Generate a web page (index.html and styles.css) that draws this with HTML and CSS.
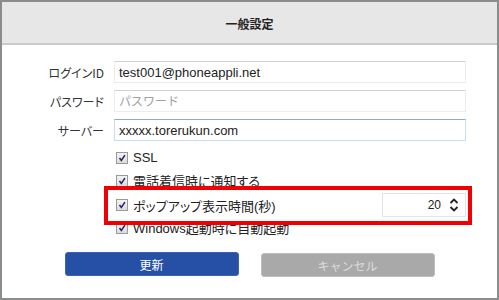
FILE: index.html
```html
<!DOCTYPE html>
<html lang="ja">
<head>
    <meta charset="UTF-8">
    <title>一般設定</title>
    <link rel="stylesheet" href="styles.css">
</head>
<body>
    <div class="dialog">
        <div class="dialog-header">一般設定</div>

        <div class="form">
            <label class="form-label">ログインID</label>
            <input class="text-input" type="text" value="test001@phoneappli.net">

            <label class="form-label">パスワード</label>
            <input class="text-input" type="password" placeholder="パスワード">

            <label class="form-label">サーバー</label>
            <input class="text-input focused" type="text" value="xxxxx.torerukun.com">
        </div>

        <div class="options">
            <div class="option">
                <span class="check"><svg viewBox="0 0 12 12"><path d="M3 6 L5.2 9 L9.5 2.5" /></svg></span>
                <span class="option-text">SSL</span>
            </div>
            <div class="option">
                <span class="check"><svg viewBox="0 0 12 12"><path d="M3 6 L5.2 9 L9.5 2.5" /></svg></span>
                <span class="option-text">電話着信時に通知する</span>
            </div>
            <div class="option option-popup">
                <span class="check"><svg viewBox="0 0 12 12"><path d="M3 6 L5.2 9 L9.5 2.5" /></svg></span>
                <span class="option-text">ポップアップ表示時間(秒)</span>
                <div class="spinner">
                    <span class="spinner-value">20</span>
                    <span class="spinner-arrows">
                        <svg viewBox="0 0 10 16"><path d="M1.5 6 L5 2.5 L8.5 6" /><path d="M1.5 10 L5 13.5 L8.5 10" /></svg>
                    </span>
                </div>
                <div class="highlight"></div>
            </div>
            <div class="option option-last">
                <span class="check"><svg viewBox="0 0 12 12"><path d="M3 6 L5.2 9 L9.5 2.5" /></svg></span>
                <span class="option-text">Windows起動時に自動起動</span>
            </div>
        </div>

        <div class="actions">
            <button class="btn btn-primary">更新</button>
            <button class="btn btn-disabled">キャンセル</button>
        </div>
    </div>
</body>
</html>
```

FILE: styles.css
```css
* {
    margin: 0;
    padding: 0;
    box-sizing: border-box;
}

body {
    font-family: 'Liberation Sans', 'Noto Sans CJK JP', sans-serif;
    font-feature-settings: "palt";
    background: #fff;
    color: #333;
}

.dialog {
    width: 499px;
    height: 300px;
    border: 2px solid #8a8d8c;
    background: #fff;
}

.dialog-header {
    height: 43px;
    background: #e7e7e7;
    border-bottom: 2px solid #cacaca;
    display: flex;
    justify-content: center;
    align-items: center;
    font-family: 'Noto Sans CJK JP', sans-serif;
    font-size: 12px;
    font-weight: bold;
    color: #222;
    padding-top: 2px;
}

/* 入力欄 */
.form {
    display: grid;
    grid-template-columns: 102px 352px;
    column-gap: 10px;
    row-gap: 7px;
    padding-top: 16px;
    align-items: center;
}

.form-label {
    text-align: right;
    font-family: 'Noto Sans CJK JP', sans-serif;
    font-size: 12px;
    color: #333;
}

.text-input {
    height: 22px;
    border: 1px solid #ececec;
    border-top-color: #d2d2d2;
    padding: 0 4px;
    font-family: 'Liberation Sans', 'Noto Sans CJK JP', sans-serif;
    font-size: 13px;
    color: #222;
    outline: none;
}

.text-input::placeholder {
    font-family: 'Noto Sans CJK JP', sans-serif;
    font-size: 12px;
    color: #a0a0a0;
}

.text-input.focused {
    border-color: #c6def0;
    border-top-color: #8eacc8;
}

/* チェックボックス */
.options {
    margin-left: 112px;
    width: 352px;
    padding-top: 5px;
}

.option {
    display: flex;
    align-items: center;
    height: 23px;
    font-family: 'Liberation Sans', 'Noto Sans CJK JP', sans-serif;
    font-size: 13px;
    color: #222;
}

.option-popup {
    height: 26px;
    position: relative;
}

.option-last {
    margin-top: -2px;
}

.check {
    width: 12px;
    height: 12px;
    margin-left: 2px;
    margin-right: 5px;
    border: 1px solid #9a9a9a;
    background: linear-gradient(#f2f2f2, #dcdcdc);
    display: flex;
}

.check svg {
    width: 10px;
    height: 10px;
    fill: none;
    stroke: #22226e;
    stroke-width: 1.8;
}

.spinner {
    margin-left: auto;
    width: 84px;
    height: 24px;
    border: 1px solid #e2e4e8;
    display: flex;
    align-items: center;
    justify-content: flex-end;
    font-size: 12px;
    color: #222;
}

.spinner-value {
    margin-right: 8px;
}

.spinner-arrows {
    width: 14px;
    margin-right: 2px;
    display: flex;
}

.spinner-arrows svg {
    width: 10px;
    height: 16px;
    fill: none;
    stroke: #222;
    stroke-width: 1.8;
}

.highlight {
    position: absolute;
    left: -10px;
    right: -6px;
    top: -6px;
    bottom: -7px;
    border: 4px solid #f00000;
    pointer-events: none;
    z-index: 1;
}

/* ボタン */
.actions {
    display: flex;
    justify-content: center;
    gap: 22px;
    margin-top: 13px;
}

.btn {
    width: 174px;
    height: 24px;
    border-radius: 3px;
    font-family: 'Noto Sans CJK JP', sans-serif;
    font-size: 12px;
    border: 1px solid;
}

.btn-primary {
    background: #2550a6;
    border-color: #3a62b4;
    color: #fff;
}

.btn-disabled {
    margin-top: 1px;
    background: #a9a9a9;
    border-color: #bdbdbd;
    color: #dcdcdc;
}
```
